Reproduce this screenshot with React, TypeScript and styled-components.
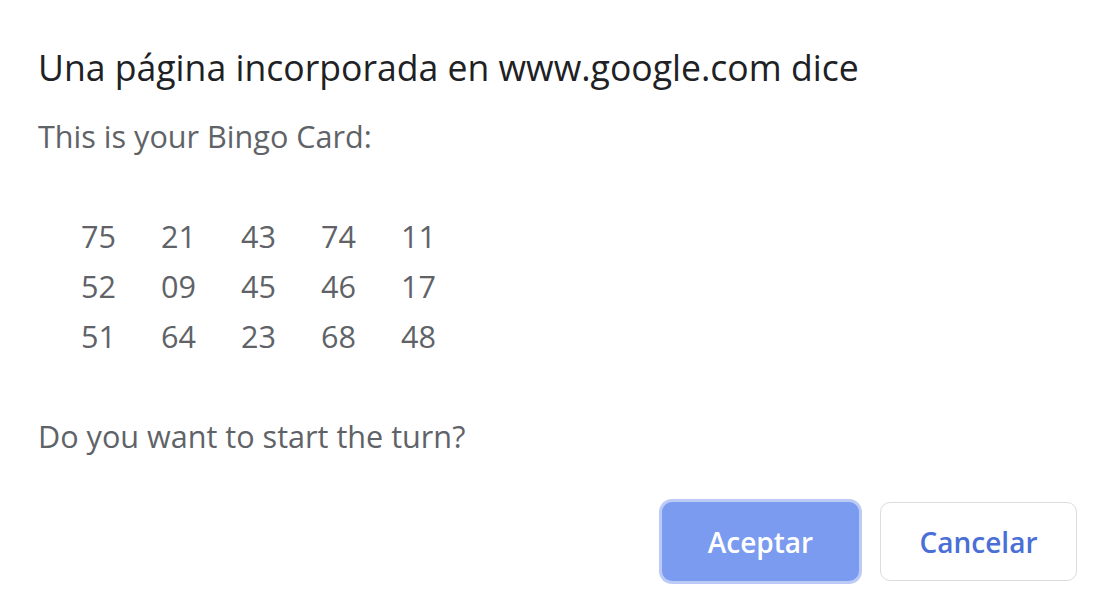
import React from "react";
import styled, { createGlobalStyle } from "styled-components";

const Global = createGlobalStyle`
  html, body { margin: 0; padding: 0; background: #ffffff; }
  body { font-family: "Open Sans", "Noto Sans", sans-serif; }
`;

const Dialog = styled.div`
  width: 1113px;
  height: 611px;
  box-sizing: border-box;
  padding: 40px 36px 0 38px;
  display: flex;
  flex-direction: column;
`;

const Title = styled.h1`
  margin: 0;
  font-size: 35.6px;
  font-weight: 400;
  line-height: 54px;
  color: #202124;
`;

const Body = styled.div`
  margin-top: 17px;
  font-size: 30.6px;
  line-height: 50px;
  color: #5f6368;
`;

const Line = styled.div`
  height: 50px;
  white-space: nowrap;
`;

const Grid = styled.div`
  display: grid;
  grid-template-columns: repeat(5, 80px);
  margin-left: 43px;
`;

const Cell = styled.span`
  height: 50px;
`;

const Actions = styled.div`
  margin-top: auto;
  margin-bottom: 30px;
  display: flex;
  justify-content: flex-end;
  gap: 21px;
`;

const Button = styled.button<{ $primary?: boolean }>`
  width: 197px;
  height: 79px;
  box-sizing: border-box;
  border-radius: 10px;
  font-family: "Open Sans", "Noto Sans", sans-serif;
  font-size: 28px;
  font-weight: 600;
  cursor: pointer;
  border: ${(p) => (p.$primary ? "none" : "1px solid #dadce0")};
  background: ${(p) => (p.$primary ? "#7a9bef" : "#ffffff")};
  color: ${(p) => (p.$primary ? "#ffffff" : "#4a6fd6")};
  box-shadow: ${(p) => (p.$primary ? "0 0 0 3px #bccbf6" : "none")};
`;

const rows = [
  ["75", "21", "43", "74", "11"],
  ["52", "09", "45", "46", "17"],
  ["51", "64", "23", "68", "48"],
];

export default function App() {
  return (
    <>
      <Global />
      <Dialog>
        <Title>Una página incorporada en www.google.com dice</Title>
        <Body>
          <Line>This is your Bingo Card:</Line>
          <Line />
          <Grid>
            {rows.flat().map((n, i) => (
              <Cell key={i}>{n}</Cell>
            ))}
          </Grid>
          <Line />
          <Line>Do you want to start the turn?</Line>
        </Body>
        <Actions>
          <Button $primary>Aceptar</Button>
          <Button>Cancelar</Button>
        </Actions>
      </Dialog>
    </>
  );
}
